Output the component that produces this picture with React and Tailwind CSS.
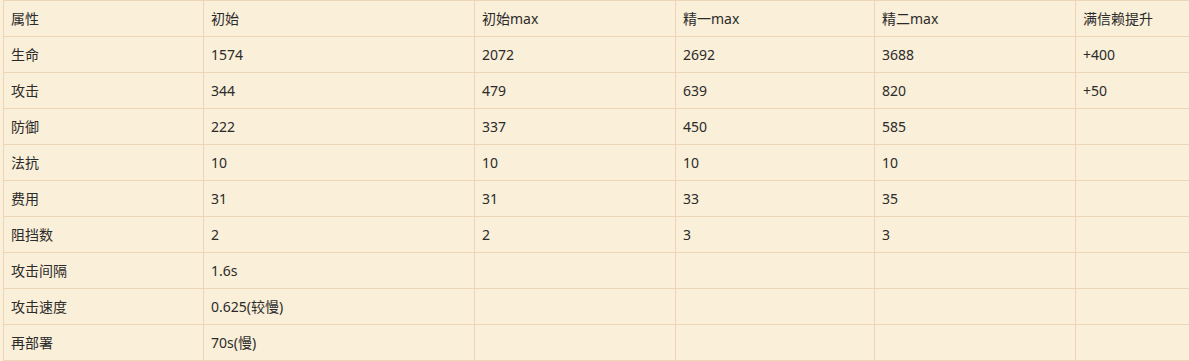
import React from "react";

const rows = [
  ["属性", "初始", "初始max", "精一max", "精二max", "满信赖提升"],
  ["生命", "1574", "2072", "2692", "3688", "+400"],
  ["攻击", "344", "479", "639", "820", "+50"],
  ["防御", "222", "337", "450", "585", ""],
  ["法抗", "10", "10", "10", "10", ""],
  ["费用", "31", "31", "33", "35", ""],
  ["阻挡数", "2", "2", "3", "3", ""],
  ["攻击间隔", "1.6s", "", "", "", ""],
  ["攻击速度", "0.625(较慢)", "", "", "", ""],
  ["再部署", "70s(慢)", "", "", "", ""],
];

export default function App() {
  return (
    <div
      className="w-[1189px] h-[361px] overflow-hidden bg-[#faefd8] text-[#2b2b2b] text-[14px]"
      style={{ fontFamily: '"Noto Sans", "Noto Sans CJK SC", sans-serif' }}
    >
      <div className="ml-[3px] w-[1300px] border-l border-t border-[#eed5b6] grid grid-cols-[200px_271px_201px_199px_201px_200px]">
        {rows.map((r, i) =>
          r.map((c, j) => (
            <div
              key={i + "-" + j}
              className="h-[36px] border-r border-b border-[#eed5b6] pl-[7px] flex items-center whitespace-nowrap leading-none"
            >
              {c}
            </div>
          ))
        )}
      </div>
    </div>
  );
}
